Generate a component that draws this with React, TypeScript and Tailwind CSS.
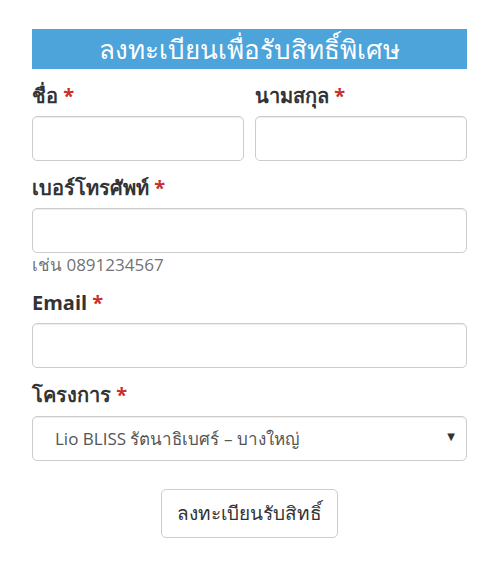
import { useState } from 'react';

const font = { fontFamily: '"Open Sans", "DejaVu Sans", sans-serif' };

function Label({ text }: { text: string }) {
  return (
    <label className="block text-[20px] leading-[26px] font-bold text-[#333]">
      {text} <span className="text-[#c9302c]">*</span>
    </label>
  );
}

const inputCls =
  'block w-full h-[45px] rounded-[5px] border border-[#ccc] bg-white text-[17px] text-[#555] shadow-[inset_0_1px_1px_rgba(0,0,0,0.075)] outline-none';

export default function App() {
  const [project, setProject] = useState('bangyai');

  return (
    <div className="w-[500px] h-[566px] bg-white" style={font}>
      <div className="ml-[32px] w-[435px] pt-[29px]">
        <h2 className="h-[40px] bg-[#4ca4db] text-center text-[26px] leading-[40px] text-white">
          ลงทะเบียนเพื่อรับสิทธิ์พิเศษ
        </h2>

        <div className="mt-[14px] flex gap-[11px]">
          <div className="flex-1">
            <Label text="ชื่อ" />
            <input type="text" className={inputCls + ' mt-[7px] px-3'} />
          </div>
          <div className="flex-1">
            <Label text="นามสกุล" />
            <input type="text" className={inputCls + ' mt-[7px] px-3'} />
          </div>
        </div>

        <div className="mt-[14px]">
          <Label text="เบอร์โทรศัพท์" />
          <input type="text" className={inputCls + ' mt-[7px] px-3'} />
          <p className="mt-[1px] text-[17px] leading-[22px] text-[#737373]">เช่น 0891234567</p>
        </div>

        <div className="mt-[14px]">
          <Label text="Email" />
          <input type="text" className={inputCls + ' mt-[7px] px-3'} />
        </div>

        <div className="mt-[14px]">
          <Label text="โครงการ" />
          <div className="relative mt-[8px]">
            <select
              value={project}
              onChange={(e) => setProject(e.target.value)}
              className={inputCls + ' appearance-none pl-[22px] pr-[30px] text-[17px] text-[#333]'}
            >
              <option value="bangyai">Lio BLISS รัตนาธิเบศร์ – บางใหญ่</option>
            </select>
            <span className="pointer-events-none absolute right-[12px] top-[13px] text-[10px] text-[#333]">▼</span>
          </div>
        </div>

        <div className="mt-[28px] flex justify-center">
          <button className="h-[49px] w-[177px] rounded-[5px] border border-[#ccc] bg-white text-[19px] text-[#333]">
            ลงทะเบียนรับสิทธิ์
          </button>
        </div>
      </div>
    </div>
  );
}
